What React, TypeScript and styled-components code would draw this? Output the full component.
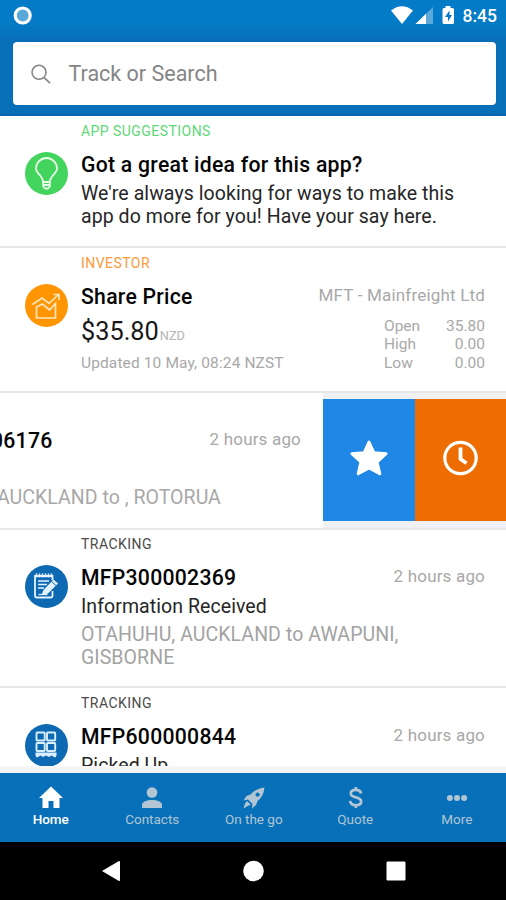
import React from "react";
import styled, { createGlobalStyle } from "styled-components";

const Global = createGlobalStyle`
  * { box-sizing: border-box; }
  body { margin: 0; background: #fff; font-family: Roboto, "Liberation Sans", sans-serif; }
`;

const Screen = styled.div`
  width: 506px;
  height: 900px;
  display: flex;
  flex-direction: column;
  overflow: hidden;
  background: #fff;
`;

const Header = styled.header`
  height: 116px;
  flex: none;
  background: linear-gradient(#047bc6 0, #047bc6 22px, #086fb9 40px, #086fb9 113px, #0a60a8 116px);
`;

const StatusBar = styled.div`
  height: 42px;
  padding: 0 9px 12px 13px;
  display: flex;
  align-items: center;
`;

const StatusIcons = styled.div`
  margin-left: auto;
  display: flex;
  align-items: center;
`;

const Time = styled.span`
  margin-left: 8px;
  padding-top: 1px;
  color: #fff;
  font-size: 17.5px;
  font-weight: 500;
  line-height: 20px;
`;

const SearchBox = styled.div`
  height: 63px;
  margin: 0 10px 0 13px;
  padding-left: 17px;
  display: flex;
  align-items: center;
  border-radius: 4px;
  background: #fff;
  box-shadow: 0 0 1px #0a4f90;
`;

const Placeholder = styled.span`
  margin-left: 16.5px;
  color: #858585;
  font-size: 21.5px;
  line-height: 26px;
`;

const Feed = styled.main`
  height: 650px;
  flex: none;
  overflow: hidden;
`;

const Card = styled.article<{ $height: number; $top?: number }>`
  height: ${(p) => p.$height}px;
  padding: ${(p) => p.$top ?? 6}px 21px 0 25px;
  display: grid;
  grid-template-columns: 56px 1fr;
  align-content: start;
  border-bottom: 2px solid #e6e6e7;
  background: #fff;
`;

const Badge = styled.div<{ $color: string }>`
  width: 43px;
  height: 43px;
  margin-top: 30px;
  border-radius: 50%;
  background: ${(p) => p.$color};
  svg { display: block; }
`;

const Category = styled.div<{ $color: string }>`
  color: ${(p) => p.$color};
  font-size: 14px;
  line-height: 18px;
  letter-spacing: 0.45px;
`;

const TitleRow = styled.div`
  height: 30px;
  margin-top: 9px;
  display: flex;
  justify-content: space-between;
  align-items: center;
`;

const Title = styled.h2`
  margin: 0;
  padding-top: 2px;
  color: #050505;
  font-size: 21.2px;
  font-weight: 500;
  line-height: 30px;
  white-space: nowrap;
  letter-spacing: 0.27px;
`;

const Meta = styled.span`
  padding-bottom: 2px;
  color: #a8a8a8;
  font-size: 17px;
  line-height: 26px;
  white-space: nowrap;
  letter-spacing: 0.18px;
`;

const Message = styled.p<{ $muted?: boolean }>`
  margin: 0;
  padding-top: ${(p) => (p.$muted ? 5 : 3)}px;
  color: ${(p) => (p.$muted ? "#a3a3a3" : "#262626")};
  font-size: 19.5px;
  line-height: 23px;
  white-space: nowrap;
  letter-spacing: 0.07px;
`;

const PriceRow = styled.div`
  display: flex;
  justify-content: space-between;
`;

const Price = styled.div`
  height: 39px;
  display: flex;
  align-items: baseline;
  color: #181818;
  font-size: 25.3px;
  line-height: 41px;
`;

const Currency = styled.span`
  margin-left: 1px;
  color: #b5b5b5;
  font-size: 12.8px;
`;

const Updated = styled.div`
  margin-top: 3px;
  color: #a8a8a8;
  font-size: 15.5px;
  line-height: 20px;
  letter-spacing: 0.12px;
`;

const Quotes = styled.dl`
  margin: 6px 0 0;
  width: 101px;
  display: grid;
  grid-template-columns: 1fr auto;
  align-content: start;
  color: #a8a8a8;
  font-size: 15.5px;
  line-height: 18.3px;
  dd { margin: 0; text-align: right; }
`;

const SwipeRow = styled.article`
  height: 137px;
  display: flex;
  align-items: stretch;
  background: #f0f1f5;
  border-bottom: 2px solid #e9e9eb;
`;

const SwipedCard = styled.div`
  width: 323px;
  padding: 31px 22px 0 0;
  overflow: hidden;
  background: #fff;
`;

const SwipedTitle = styled.div`
  display: flex;
  align-items: center;
  justify-content: space-between;
  margin-left: -9px;
`;

const SwipedRoute = styled.div`
  margin: 30px 0 0 -3px;
  color: #a8a8a8;
  font-size: 19.5px;
  line-height: 24px;
  white-space: nowrap;
  letter-spacing: 0.04px;
`;

const SwipeAction = styled.div<{ $color: string }>`
  height: 122px;
  margin-top: 6px;
  padding-bottom: 4px;
  flex: 1;
  display: flex;
  align-items: center;
  justify-content: center;
  background: ${(p) => p.$color};
`;

const Gutter = styled.div`
  height: 7px;
  flex: none;
  background: linear-gradient(#f7f7f8, #eeeff4);
`;

const Tabs = styled.nav`
  height: 69px;
  flex: none;
  display: grid;
  grid-template-columns: repeat(5, 101.5px);
  background: #0870b9;
`;

const Tab = styled.div<{ $active?: boolean }>`
  padding-top: 12px;
  display: flex;
  flex-direction: column;
  align-items: center;
  color: ${(p) => (p.$active ? "#fff" : "#b1c5d3")};
  font-size: 13.5px;
  font-weight: ${(p) => (p.$active ? 500 : 400)};
  line-height: 18px;
  svg { display: block; }
`;

const SystemNav = styled.div`
  height: 58px;
  flex: none;
  padding: 0 99px 0 101px;
  display: flex;
  align-items: center;
  justify-content: space-between;
  background: #000;
`;

const BulbIcon = () => (
  <svg width="43" height="43" viewBox="0 0 43 43" fill="none" stroke="#e9ffe9" strokeWidth="1.8" strokeLinejoin="round">
    <path d="M18.200 30c0-2.500-1-4-3-6.500C12.700 21 11 19.300 11 16.500a10.500 10.500 0 0 1 21 0c0 2.800-1.700 4.500-4.200 7-2 2.500-3 4-3 6.500z" />
    <path d="M18.200 30v4.500l1.800 2h3l1.800-2V30M18.200 33h6.600" />
  </svg>
);

const ChartIcon = () => (
  <svg width="43" height="43" viewBox="0 0 43 43" fill="none" stroke="#ffe7bb" strokeWidth="1.7">
    <path d="M7.500 20.500 17 14l7 5.500 9-8.500M28.500 10.500H34v5.500" />
    <path d="M11.500 34V23l6-3 7 6 6-6.500V34z" />
  </svg>
);

const NoteIcon = () => (
  <svg width="43" height="43" viewBox="0 0 43 43" fill="none" stroke="#e4f2ff" strokeWidth="1.8">
    <path d="M27.500 26v4.500a2 2 0 0 1-2 2H12a2 2 0 0 1-2-2V11h17.500v4" />
    <path d="M11.500 8.500v4M14.500 8.500v4M17.500 8.500v4M20.500 8.500v4M23.500 8.500v4M26.500 8.500v4" strokeWidth="1.600" />
    <path d="M13 16h11M13 19.500h9M13 23h6" strokeWidth="1.500" />
    <path d="M16.500 30 18.500 25l10-10.500 4.500 4L23 28.500z" fill="#e4f2ff" stroke="none" />
    <path d="m26.500 16.500 4.500 4" stroke="#0c69b2" strokeWidth="1" />
    <path d="M13.500 29.500h9" strokeWidth="1.200" />
  </svg>
);

const PalletIcon = () => (
  <svg width="43" height="43" viewBox="0 0 43 43" fill="none" stroke="#d9efff" strokeWidth="1.900">
    <rect x="11.500" y="8.500" width="8.200" height="8" rx=".8" />
    <rect x="22" y="8.500" width="8.200" height="8" rx=".8" />
    <rect x="11.500" y="19" width="8.200" height="8" rx=".8" />
    <rect x="22" y="19" width="8.200" height="8" rx=".8" />
    <path d="M10.500 28.500h21v3l-1 2-2-.8-2-1.200-2.500 1.500-3-1.500-3 1.500-2.500-1.500-2 1.200-2 .8-1-2z" fill="#d9efff" stroke="none" />
  </svg>
);

export default function App() {
  return (
    <>
      <Global />
      <Screen>
        <Header>
          <StatusBar>
            <svg width="19" height="19" viewBox="0 0 19 19">
              <circle cx="9.700" cy="9.500" r="7.500" fill="#58a9d9" stroke="#fff" strokeWidth="3.200" />
            </svg>
            <StatusIcons>
              <svg width="65" height="20" viewBox="0 0 65 20" fill="#fff">
                <path d="M1 5.500Q12-3 23 5.500L12 19z" />
                <path d="M43 2v17H25.500z" fillOpacity=".35" />
                <path d="M36 8.800V19H25.500z" />
                <path fillRule="evenodd" d="M55.500 1h5v2H62.500a1.500 1.500 0 0 1 1.500 1.500v13a1.500 1.500 0 0 1-1.500 1.500H54a1.500 1.500 0 0 1-1.500-1.500v-13A1.500 1.500 0 0 1 54 3h1.500zM59.500 5.500 55 12h3v4.500l4-6.500h-2.500z" />
              </svg>
              <Time>8:45</Time>
            </StatusIcons>
          </StatusBar>
          <SearchBox>
            <svg width="22" height="22" viewBox="0 0 22 22" fill="none" stroke="#858585" strokeWidth="1.600">
              <circle cx="9" cy="9.300" r="7" />
              <path d="m14 14.300 6 5.800" />
            </svg>
            <Placeholder>Track or Search</Placeholder>
          </SearchBox>
        </Header>

        <Feed>
          <Card $height={132}>
            <Badge $color="#42d45c"><BulbIcon /></Badge>
            <div>
              <Category $color="#5ed878">APP SUGGESTIONS</Category>
              <TitleRow><Title>Got a great idea for this app?</Title></TitleRow>
              <Message>We're always looking for ways to make this<br />app do more for you! Have your say here.</Message>
            </div>
          </Card>

          <Card $height={144.5}>
            <Badge $color="#ff9502"><ChartIcon /></Badge>
            <div>
              <Category $color="#fb993b">INVESTOR</Category>
              <TitleRow>
                <Title>Share Price</Title>
                <Meta>MFT - Mainfreight Ltd</Meta>
              </TitleRow>
              <PriceRow>
                <div>
                  <Price>$35.80<Currency>NZD</Currency></Price>
                  <Updated>Updated 10 May, 08:24 NZST</Updated>
                </div>
                <Quotes>
                  <dt>Open</dt><dd>35.80</dd>
                  <dt>High</dt><dd>0.00</dd>
                  <dt>Low</dt><dd>0.00</dd>
                </Quotes>
              </PriceRow>
            </div>
          </Card>

          <SwipeRow>
            <SwipedCard>
              <SwipedTitle>
                <Title>06176</Title>
                <Meta>2 hours ago</Meta>
              </SwipedTitle>
              <SwipedRoute>AUCKLAND to , ROTORUA</SwipedRoute>
            </SwipedCard>
            <SwipeAction $color="#1f87e5">
              <svg width="40" height="38" viewBox="0 0 40 38" fill="#fff" stroke="#fff" strokeWidth="3" strokeLinejoin="round">
                <path d="m20 3 4.800 10.700 12.300 1-9 8.300 2.700 11.800L20 29 9.200 34.800 11.900 23l-9-8.300 12.300-1z" />
              </svg>
            </SwipeAction>
            <SwipeAction $color="#ee6d02">
              <svg width="36" height="36" viewBox="0 0 36 36" fill="none" stroke="#fff" strokeWidth="3.200">
                <circle cx="18.500" cy="18" r="15.700" />
                <path d="M18.500 7.500v11.500l6 4.300" strokeWidth="3.800" strokeLinejoin="round" />
              </svg>
            </SwipeAction>
          </SwipeRow>

          <Card $height={158.5} $top={5}>
            <Badge $color="#0c69b2"><NoteIcon /></Badge>
            <div>
              <Category $color="#4b4b4b">TRACKING</Category>
              <TitleRow>
                <Title>MFP300002369</Title>
                <Meta>2 hours ago</Meta>
              </TitleRow>
              <Message>Information Received</Message>
              <Message $muted>OTAHUHU, AUCKLAND to AWAPUNI,<br />GISBORNE</Message>
            </div>
          </Card>

          <Card $height={158}>
            <Badge $color="#0c69b2"><PalletIcon /></Badge>
            <div>
              <Category $color="#4b4b4b">TRACKING</Category>
              <TitleRow>
                <Title>MFP600000844</Title>
                <Meta>2 hours ago</Meta>
              </TitleRow>
              <Message>Picked Up</Message>
            </div>
          </Card>
        </Feed>

        <Gutter />
        <Tabs>
          <Tab $active>
            <svg width="26" height="25" viewBox="0 0 26 25" fill="currentColor">
              <path d="M13 1.500 25 13h-3.500v10H15.500v-7h-5v7H4.500V13H1z" />
            </svg>
            Home
          </Tab>
          <Tab>
            <svg width="24" height="25" viewBox="0 0 24 25" fill="currentColor">
              <circle cx="12" cy="7.500" r="5.300" />
              <path d="M2 23v-3c0-3.300 5-5 10-5s10 1.700 10 5v3z" />
            </svg>
            Contacts
          </Tab>
          <Tab>
            <svg width="24" height="25" viewBox="0 0 24 25" fill="currentColor">
              <path fillRule="evenodd" d="M22.500 2.500C17 3 12 5.500 8.500 9.500L4.500 11 1.500 15.500l4.500-1 4.500 4.500-.5 4.500 4-3.500 1.500-4c4-3 6.500-7.500 7-13.500zM14 8.500a2 2 0 1 1 2.800 2.800A2 2 0 0 1 14 8.500z" />
              <path d="m5 16 4 4-2.500.5L1.500 23.500l1.500-5z" />
            </svg>
            On the go
          </Tab>
          <Tab>
            <svg width="20" height="25" viewBox="0 0 20 25" fill="none" stroke="currentColor" strokeWidth="2.700">
              <path d="M16 8.500C15.700 5.800 13.500 4.800 10.800 4.800 7.700 4.800 5.800 6 5.800 8.400c0 5.200 10.400 2.700 10.400 8 0 2.500-2.200 3.800-5.200 3.800-3.200 0-5.600-1.300-5.900-4.300M10.800 2v3M10.800 20v3" />
            </svg>
            Quote
          </Tab>
          <Tab>
            <svg width="22" height="25" viewBox="0 0 22 25" fill="currentColor">
              <circle cx="3.900" cy="13" r="3" /><circle cx="11" cy="13" r="3" /><circle cx="18.100" cy="13" r="3" />
            </svg>
            More
          </Tab>
        </Tabs>
        <SystemNav>
          <svg width="21" height="22" viewBox="0 0 21 22" fill="#fff"><path d="M1 11 17.500 1.200Q19 .5 19 2v18q0 1.500-1.500.8z" /></svg>
          <svg width="22" height="22" viewBox="0 0 22 22" fill="#fff"><circle cx="10.500" cy="11" r="10.300" /></svg>
          <svg width="22" height="22" viewBox="0 0 22 22" fill="#fff"><rect x="1.500" y="1.500" width="19" height="19" rx="1.200" /></svg>
        </SystemNav>
      </Screen>
    </>
  );
}
